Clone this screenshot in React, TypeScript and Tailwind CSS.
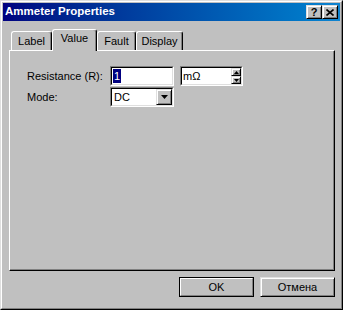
import React from 'react'

function BevelBox({ className = '', children }: { className?: string; children?: React.ReactNode }) {
  return (
    <div
      className={`flex items-center justify-center bg-[#c0c0c0] border border-t-[#dfdfdf] border-l-[#dfdfdf] border-r-black border-b-black shadow-[inset_1px_1px_0_#ffffff,inset_-1px_-1px_0_#808080] ${className}`}
    >
      {children}
    </div>
  )
}

function Sunken({ className = '', children }: { className?: string; children?: React.ReactNode }) {
  return (
    <div className={`border border-t-[#808080] border-l-[#808080] border-r-white border-b-white ${className}`}>
      <div className="flex h-full w-full items-stretch border border-t-black border-l-black border-r-[#dfdfdf] border-b-[#dfdfdf] bg-white">
        {children}
      </div>
    </div>
  )
}

function ArrowDown({ w = 7 }: { w?: number }) {
  return (
    <svg width={w} height={Math.ceil(w / 2)} viewBox={`0 0 ${w} ${Math.ceil(w / 2)}`}>
      <polygon points={`0,0 ${w},0 ${w / 2},${Math.ceil(w / 2)}`} fill="black" />
    </svg>
  )
}

function ArrowUp({ w = 5 }: { w?: number }) {
  return (
    <svg width={w} height={Math.ceil(w / 2)} viewBox={`0 0 ${w} ${Math.ceil(w / 2)}`}>
      <polygon points={`0,${Math.ceil(w / 2)} ${w},${Math.ceil(w / 2)} ${w / 2},0`} fill="black" />
    </svg>
  )
}

const TABS = [
  { label: 'Label', width: 41 },
  { label: 'Value', width: 45 },
  { label: 'Fault', width: 39 },
  { label: 'Display', width: 47 },
]

export default function App() {
  const active = 'Value'

  return (
    <div className="h-[310px] w-[343px] border border-t-[#dfdfdf] border-l-[#dfdfdf] border-r-black border-b-black bg-[#c0c0c0] font-['Liberation_Sans',Arial,sans-serif] text-[11px] leading-none text-black">
      <div className="flex h-full flex-col border border-t-white border-l-white border-r-[#808080] border-b-[#808080] p-px">
        {/* Title bar */}
        <div className="flex h-[18px] shrink-0 items-center bg-gradient-to-r from-[#000080] to-[#1084d0] pl-[2px] pr-[2px]">
          <span className="flex-1 text-[11.5px] font-bold text-white">Ammeter Properties</span>
          <BevelBox className="h-[14px] w-[16px]">
            <span className="text-[11px] font-bold leading-none">?</span>
          </BevelBox>
          <BevelBox className="h-[14px] w-[16px]">
            <svg width="8" height="7" viewBox="0 0 8 7">
              <path d="M0.5 0.5 L7.5 6.5 M7.5 0.5 L0.5 6.5" stroke="black" strokeWidth="1.6" />
            </svg>
          </BevelBox>
        </div>

        {/* Body */}
        <div className="flex flex-col pl-[6px] pt-[8px]">
          {/* Tabs */}
          <div className="flex h-[21px] items-end pl-[2px]">
            {TABS.map(t => {
              const isActive = t.label === active
              return (
                <div
                  key={t.label}
                  style={{ width: t.width }}
                  className={
                    isActive
                      ? 'relative z-10 mb-[-1px] flex h-[22px] items-center justify-center rounded-t-[3px] border-l border-t border-r border-l-white border-t-white border-r-black bg-[#c0c0c0] pb-[4px] shadow-[inset_-1px_0_0_#808080]'
                      : 'flex h-[19px] items-center justify-center rounded-t-[3px] border-l border-t border-r border-l-white border-t-white border-r-black bg-[#c0c0c0] pt-[1px] shadow-[inset_-1px_0_0_#808080]'
                  }
                >
                  {t.label}
                </div>
              )
            })}
          </div>

          {/* Panel */}
          <div className="h-[221px] w-[326px] border border-t-white border-l-white border-r-black border-b-black pl-[17px] pt-[15px] shadow-[inset_-1px_-1px_0_#808080]">
            <div className="flex h-[20px] items-center">
              <span className="w-[83px]">Resistance (R):</span>
              <Sunken className="h-[20px] w-[64px]">
                <div className="flex items-center py-[1px] pl-[1px]">
                  <span className="flex h-full items-center bg-[#000080] px-[1px] text-white">1</span>
                </div>
              </Sunken>
              <Sunken className="ml-[6px] h-[20px] w-[63px]">
                <div className="flex flex-1 items-center pl-[1px]">mΩ</div>
                <div className="flex flex-col">
                  <BevelBox className="h-[8px] w-[10px]">
                    <ArrowUp />
                  </BevelBox>
                  <BevelBox className="h-[8px] w-[10px]">
                    <ArrowDown w={5} />
                  </BevelBox>
                </div>
              </Sunken>
            </div>
            <div className="mt-[1px] flex h-[20px] items-center">
              <span className="w-[83px]">Mode:</span>
              <Sunken className="h-[20px] w-[64px]">
                <div className="flex flex-1 items-center pl-[2px]">DC</div>
                <BevelBox className="h-[16px] w-[16px]">
                  <ArrowDown />
                </BevelBox>
              </Sunken>
            </div>
          </div>

          {/* Buttons */}
          <div className="mt-[6px] flex w-[326px] justify-end gap-[6px]">
            <div className="h-[20px] w-[75px] border border-black">
              <div className="flex h-full w-full items-center justify-center border border-t-white border-l-white border-r-[#808080] border-b-[#808080]">
                OK
              </div>
            </div>
            <BevelBox className="h-[20px] w-[75px]">Отмена</BevelBox>
          </div>
        </div>
      </div>
    </div>
  )
}
